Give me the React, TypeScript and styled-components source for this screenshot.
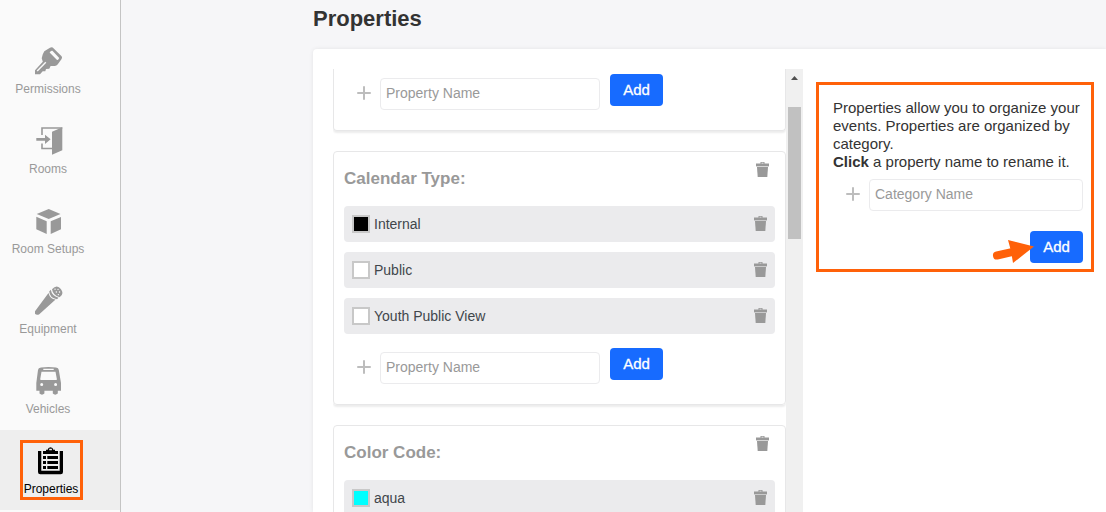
import React from 'react';
import styled, { createGlobalStyle } from 'styled-components';

const GlobalStyle = createGlobalStyle`
  *, *::before, *::after { box-sizing: border-box; }
  body {
    margin: 0;
    font-family: "Liberation Sans", Arial, sans-serif;
    font-size: 14px;
    color: #333;
    background: #f6f6f8;
  }
`;

const Page = styled.div`
  display: flex;
  height: 100vh;
  overflow: hidden;
`;

const Sidebar = styled.nav`
  flex: none;
  display: flex;
  flex-direction: column;
  width: 121px;
  padding-top: 30px;
  background: #fafafa;
  border-right: 1px solid #c4c4c4;
`;

const NavItem = styled.a<{ $active?: boolean }>`
  flex: none;
  display: flex;
  justify-content: center;
  align-items: center;
  height: 80px;
  padding: ${(p) => (p.$active ? '0 17px 0 0' : '2px 24px 0 0')};
  background: ${(p) => (p.$active ? '#eee' : 'transparent')};
  color: ${(p) => (p.$active ? '#000' : '#999')};
  font-size: 12px;
  line-height: 14px;
  text-decoration: none;
`;

const NavContent = styled.span<{ $active?: boolean }>`
  display: flex;
  flex-direction: column;
  align-items: center;
  gap: 6px;
  ${(p) =>
    p.$active &&
    `
    width: 63px;
    height: 60px;
    padding: 3px 1px 0 0;
    border: 3px solid #ff6109;
  `}
`;

const NavIcon = styled.svg`
  display: block;
  width: 30px;
  height: 30px;
  fill: currentColor;
`;

const Main = styled.main`
  flex: 1;
  min-width: 0;
  display: flex;
  flex-direction: column;
  padding-left: 192px;
`;

const Title = styled.h1`
  margin: 0;
  padding: 4px 0 15px;
  font-size: 22px;
  line-height: 30px;
`;

const Panel = styled.section`
  flex: 1;
  min-height: 0;
  display: flex;
  align-items: flex-start;
  gap: 13px;
  padding: 20px 12px 0 20px;
  background: #fff;
  border-radius: 4px 0 0 0;
  box-shadow: 0 0 4px rgba(0, 0, 0, 0.08);
`;

const ListPane = styled.div`
  flex: 1;
  min-width: 0;
  align-self: stretch;
  display: flex;
  overflow: hidden;
`;

const List = styled.div`
  flex: 1;
  min-width: 0;
  display: flex;
  flex-direction: column;
  gap: 20px;
`;

const Track = styled.div`
  flex: none;
  display: flex;
  flex-direction: column;
  align-items: center;
  width: 17px;
  padding-top: 7px;
  gap: 27px;
  background: #f0f0f0;
`;

const Thumb = styled.div`
  width: 13px;
  height: 132px;
  background: #c1c1c1;
`;

const Card = styled.section<{ $continued?: boolean }>`
  flex: none;
  padding: ${(p) => (p.$continued ? '5px' : '10px')} 10px 20px;
  border: 1px solid #e7e7e8;
  border-top-width: ${(p) => (p.$continued ? 0 : 1)}px;
  border-radius: ${(p) => (p.$continued ? '0 0 4px 4px' : '4px')};
  box-shadow: 0 2px 2px rgba(0, 0, 0, 0.08);
`;

const CardHeader = styled.header`
  display: flex;
  justify-content: space-between;
  align-items: flex-start;
  height: 44px;
  padding-right: 6px;
`;

const CardTitle = styled.h2`
  margin: 0;
  font-size: 17px;
  line-height: 34px;
  color: #999;
`;

const Rows = styled.ul`
  display: flex;
  flex-direction: column;
  gap: 10px;
  margin: 0;
  padding: 0;
  list-style: none;
`;

const Row = styled.li`
  display: flex;
  align-items: center;
  gap: 4px;
  height: 36px;
  padding: 0 8px;
  background: #ebebed;
  border-radius: 4px;
  color: #41464b;
`;

const Swatch = styled.span<{ $color: string }>`
  width: 18px;
  height: 18px;
  border: 2px solid #c8c8c8;
  background: ${(p) => p.$color};
`;

const RowName = styled.span`
  flex: 1;
`;

const IconButton = styled.button`
  display: block;
  padding: 0 0 1px;
  border: 0;
  background: none;
  color: #999;
  svg { display: block; fill: currentColor; }
`;

const AddForm = styled.form`
  display: flex;
  align-items: flex-start;
  gap: 10px;
  height: 36px;
`;

const RowsThenForm = styled.div`
  display: flex;
  flex-direction: column;
  gap: 14px;
`;

const Field = styled.label<{ $wide?: boolean }>`
  display: flex;
  align-items: center;
  gap: 9px;
  padding-left: 13px;
  margin-top: ${(p) => (p.$wide ? 0 : 4)}px;
  svg { flex: none; margin-bottom: 2px; }
`;

const TextInput = styled.input`
  flex: 1;
  min-width: 0;
  width: 220px;
  height: 32px;
  padding: 0 5px 2px;
  border: 1px solid #ebebed;
  border-radius: 4px;
  background: #fff;
  font: inherit;
  font-size: 14px;
  &::placeholder { color: #999; opacity: 1; }
`;

const AddButton = styled.button`
  width: 53px;
  height: 32px;
  padding: 0 0 2px;
  border: 0;
  border-radius: 4px;
  background: #176bff;
  color: #fff;
  font-family: inherit;
  font-size: 15px;
  -webkit-text-stroke: 0.3px #fff;
`;

const Help = styled.aside`
  flex: none;
  width: 278px;
  margin-top: 13px;
  padding: 14px 8px 6px 14px;
  border: 3px solid #ff6109;
`;

const HelpText = styled.p`
  margin: 0 0 8px;
  font-size: 15px;
  line-height: 18px;
`;

const HelpForm = styled.form`
  display: flex;
  flex-direction: column;
  gap: 20px;
`;

const ButtonAnchor = styled.div`
  position: relative;
  align-self: flex-end;
`;

const Pointer = styled.svg`
  position: absolute;
  right: 45px;
  top: 7px;
`;

function Trash() {
  return (
    <IconButton type="button" aria-label="Delete">
      <svg width="13" height="15" viewBox="0 0 13 15">
        <path d="M4.5 0h4v1.5H13v2.5H0V1.5h4.5zM5.5 .8v.7h2V.8z" fillRule="evenodd" />
        <path d="M0 4h13v1H0z" opacity="0.4" />
        <path d="M1 5h11l-.7 10H1.7z" />
      </svg>
    </IconButton>
  );
}

function Plus() {
  return (
    <svg width="14" height="14" viewBox="0 0 14 14" aria-hidden="true">
      <path d="M7 1v12M1 7h12" stroke="#bdbdbd" strokeWidth="2" strokeLinecap="round" />
    </svg>
  );
}

function NameForm() {
  return (
    <AddForm>
      <Field>
        <Plus />
        <TextInput placeholder="Property Name" aria-label="Property Name" />
      </Field>
      <AddButton type="button">Add</AddButton>
    </AddForm>
  );
}

type Item = { name: string; color: string };

function Category({ title, items, canAdd }: { title: string; items: Item[]; canAdd?: boolean }) {
  return (
    <Card>
      <CardHeader>
        <CardTitle>{title}</CardTitle>
        <Trash />
      </CardHeader>
      <RowsThenForm>
        <Rows>
          {items.map((item) => (
            <Row key={item.name}>
              <Swatch $color={item.color} />
              <RowName>{item.name}</RowName>
              <Trash />
            </Row>
          ))}
        </Rows>
        {canAdd && <NameForm />}
      </RowsThenForm>
    </Card>
  );
}

const icons: Record<string, React.ReactNode> = {
  Permissions: (
    <g>
      <path
        fillRule="evenodd"
        d="M10.3 4.3 16 .7Q17.5-.2 18.7.6L27.6 9.3Q28.5 10.5 27.6 12L23.6 17.6Q22.5 19.2 20.3 19H16.6L15.3 21.8 12 22 11.3 24.3H8.7L6 27.3H1V23.3L8.8 14.7 7.7 11.3 8.7 7.6ZM15.6 5.4 22.8 12.7Q23.8 13.4 24.5 12.3L25.2 10.9 18.4 3.8Q17 3.2 15.6 5.4Z"
      />
      <path d="M3.2 24 11.8 15.3" stroke="#fafafa" strokeWidth="1.4" />
    </g>
  ),
  Rooms: (
    <g>
      <path d="M6 9V2H26.3M6 17.5V22.5H16" fill="none" stroke="currentColor" strokeWidth="1.6" />
      <path d="M26.3 1.2V24.3L16 28.7V5.7ZM.3 12H9V8.7L14.6 13.3 9 18V14.7H.3Z" />
    </g>
  ),
  'Room Setups': (
    <path d="M12.7 1 24.5 6 12.7 11 .7 6ZM.3 8.7 10.7 13.3V26L.3 21.3ZM14.7 13.3 25 8.9V21.3L14.7 26Z" />
  ),
  Equipment: (
    <g>
      <path d="M14.5 7Q16 13 21.6 13.6L5 28.4Q2.5 29.5 1 27.8V25.3Z" />
      <path d="M15.2 5.5Q15.8 12.2 23 13.2L24.6 11.8Q17.8 10 16.8 3.8Z" />
      <path d="M18 3.2Q23-2 27 3.2 30.5 8.2 25.6 11.2 19 9.5 18 3.2Z" />
      <path d="M21 3.2h.1M24 3.3h.1M22.3 6h.1M25.5 6h.1M24.3 8.6h.1" stroke="#fafafa" strokeWidth="1.3" strokeLinecap="round" />
    </g>
  ),
  Vehicles: (
    <path
      fillRule="evenodd"
      d="M2 4Q2.2 2 5 1.6 12.5.2 20 1.6 22.6 2 22.8 4L25 17V24.8H21.8V27.5Q19.2 29.8 16.8 27.5V24.8H8.4V27.5Q6 29.8 3.5 27.5V24.8H.3V17ZM7.3 2.7V4H17.7V2.7ZM5.5 5.8 4.2 13.2Q4.2 14 5 14H20.2Q21 14 20.9 13.2L19.5 5.8ZM5.7 17A1.5 1.5 0 1 0 5.7 20 1.5 1.5 0 1 0 5.7 17ZM19.6 17A1.5 1.5 0 1 0 19.6 20 1.5 1.5 0 1 0 19.6 17Z"
    />
  ),
  Properties: (
    <g>
      <path
        fillRule="evenodd"
        d="M0 4H3.3V23.7H21.7V4H25V25Q25 27.3 22.7 27.3H2.3Q0 27.3 0 25ZM5 4H8V2.7H9.7Q10 .2 12.5 .2T15.3 2.7H17V4H20V7H5ZM11.2 3.2H13.9V1.8H11.2Z"
      />
      <path d="M5 9H8V12H5ZM9.3 9H20V12H9.3ZM5 14H8V17H5ZM9.3 14H20V17H9.3ZM5 19H8V22H5ZM9.3 19H20V22H9.3Z" />
    </g>
  ),
};

const iconBoxes: Record<string, string> = {
  Permissions: '-1 -1 30 30',
  Rooms: '-3 0 30 30',
  'Room Setups': '-3 -2 30 30',
  Equipment: '-1 0 30 30',
  Vehicles: '-3 0 30 30',
  Properties: '-2 -1 30 30',
};

export default function App() {
  return (
    <>
      <GlobalStyle />
      <Page>
        <Sidebar>
          {Object.keys(icons).map((name) => {
            const active = name === 'Properties';
            return (
              <NavItem key={name} href="#" $active={active}>
                <NavContent $active={active}>
                  <NavIcon viewBox={iconBoxes[name]} aria-hidden="true">
                    {icons[name]}
                  </NavIcon>
                  {name}
                </NavContent>
              </NavItem>
            );
          })}
        </Sidebar>
        <Main>
          <Title>Properties</Title>
          <Panel>
            <ListPane>
              <List>
                <Card $continued>
                  <NameForm />
                </Card>
                <Category
                  title="Calendar Type:"
                  canAdd
                  items={[
                    { name: 'Internal', color: '#000' },
                    { name: 'Public', color: '#fff' },
                    { name: 'Youth Public View', color: '#fff' },
                  ]}
                />
                <Category title="Color Code:" items={[{ name: 'aqua', color: '#0ff' }]} />
              </List>
              <Track>
                <svg width="7" height="4" viewBox="0 0 7 4" aria-hidden="true">
                  <path d="M3.5 0 7 4H0z" fill="#505050" />
                </svg>
                <Thumb />
              </Track>
            </ListPane>
            <Help>
              <HelpText>
                Properties allow you to organize your events. Properties are organized by category.
                <br />
                <strong>Click</strong> a property name to rename it.
              </HelpText>
              <HelpForm>
                <Field $wide>
                  <Plus />
                  <TextInput placeholder="Category Name" aria-label="Category Name" />
                </Field>
                <ButtonAnchor>
                  <AddButton type="button">Add</AddButton>
                  <Pointer width="48" height="28" viewBox="0 0 48 28" aria-hidden="true">
                    <path d="M7 17.5 24 13.6" stroke="#ff6109" strokeWidth="8" strokeLinecap="round" />
                    <path d="M18 2 44 8.5 23 25 21 13Z" fill="#ff6109" />
                  </Pointer>
                </ButtonAnchor>
              </HelpForm>
            </Help>
          </Panel>
        </Main>
      </Page>
    </>
  );
}
